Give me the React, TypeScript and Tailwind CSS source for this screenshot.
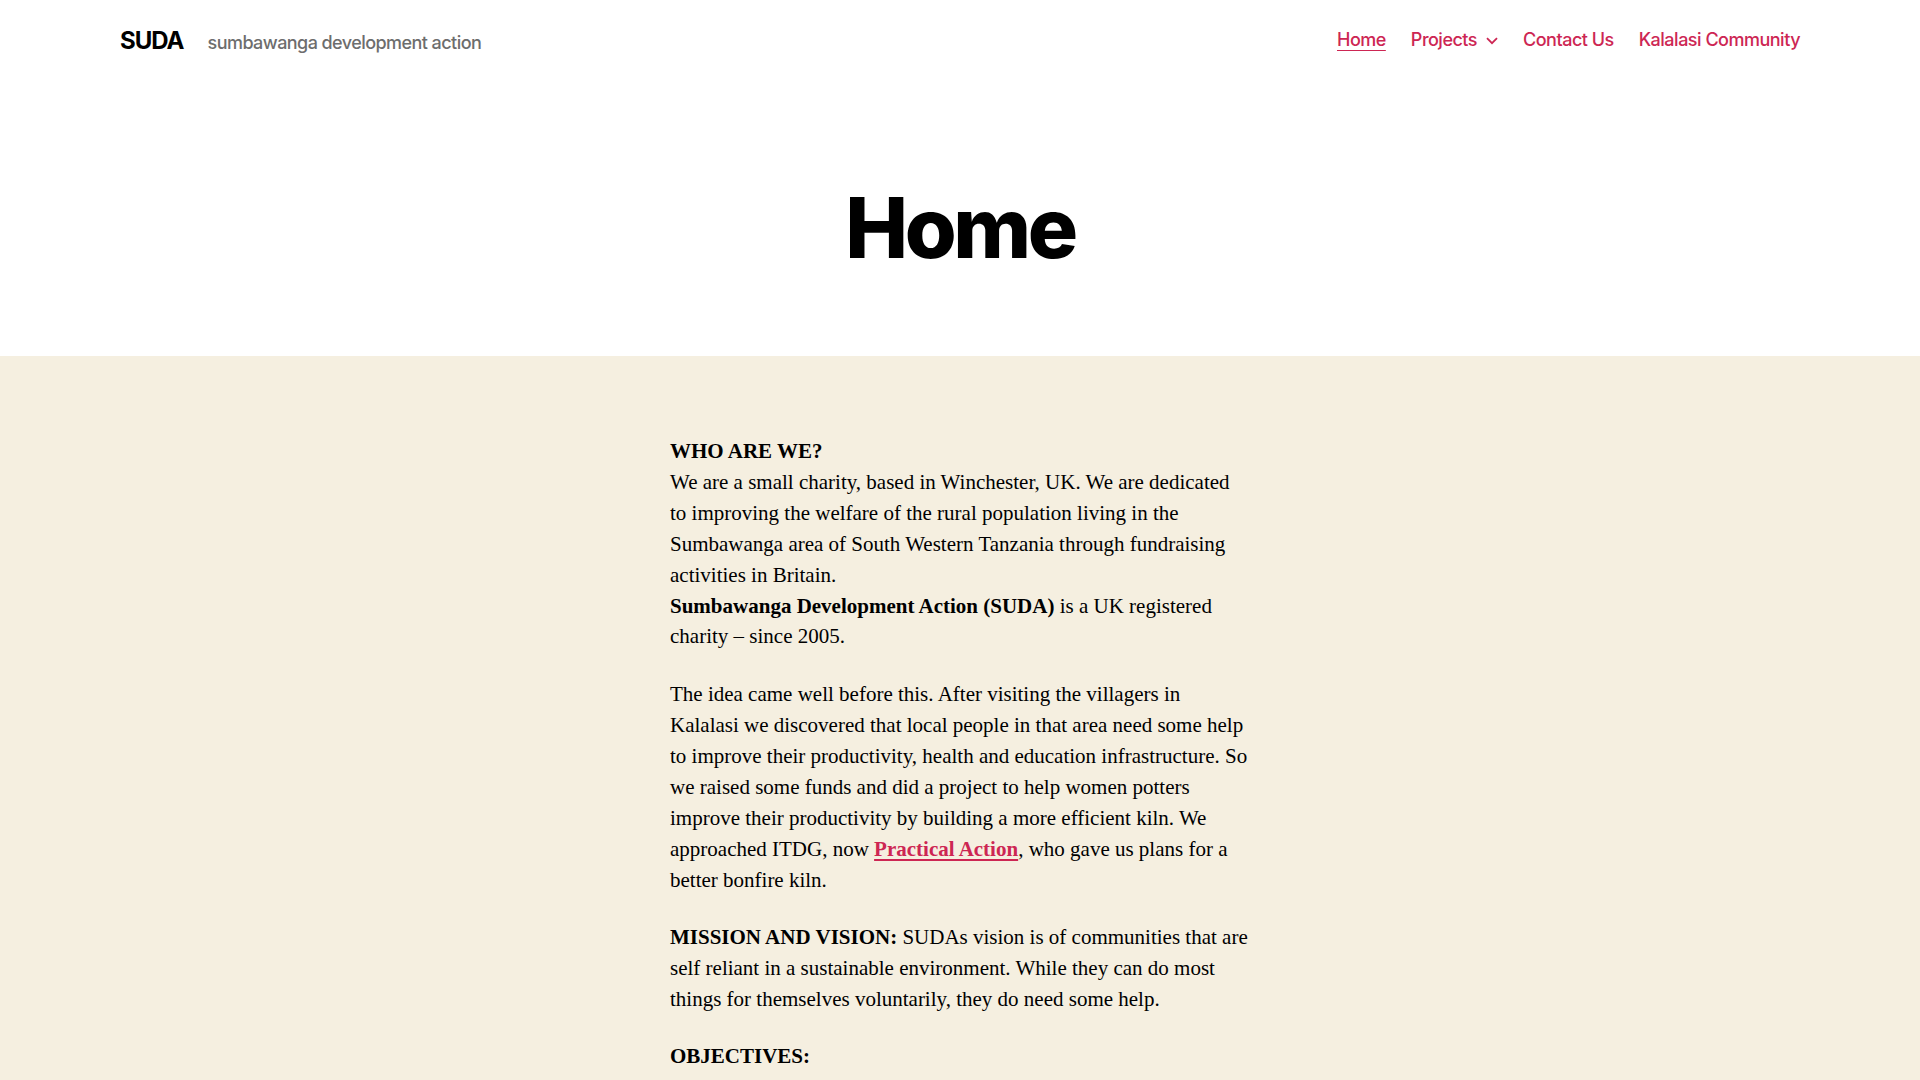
export default function App() {
  const navItems = ['Home', 'Projects', 'Contact Us', 'Kalalasi Community'];

  return (
    <div className="min-h-screen bg-white text-black">
      {/* Header */}
      <header className="font-['Inter',sans-serif]">
        <div className="mx-[120px] flex h-[100px] items-start justify-between pt-[23px]">
          <div className="flex items-baseline">
            <span className="text-[24px] font-bold tracking-[-0.0415625em]">SUDA</span>
            <span className="ml-[24px] text-[18px] font-medium tracking-[-0.0311em] text-[#6d6d6d]">sumbawanga development action</span>
          </div>
          <nav className="mt-[3px] flex items-baseline gap-[25px] text-[18px] font-medium tracking-[-0.0277em] text-[#cd2653]">
            {navItems.map((item) => (
              <a
                key={item}
                href="#"
                className={`flex items-center ${item === 'Home' ? 'underline underline-offset-[4px] decoration-[1px]' : ''}`}
              >
                {item}
                {item === 'Projects' && (
                  <svg className="ml-[9px] mt-[3px]" width="12" height="8" viewBox="0 0 12 8" fill="none">
                    <polyline points="1,1.2 6,6.2 11,1.2" stroke="#cd2653" strokeWidth="1.8" />
                  </svg>
                )}
              </a>
            ))}
          </nav>
        </div>
      </header>

      {/* Page title */}
      <div className="flex justify-center py-[80px] font-['Inter',sans-serif]">
        <h1 className="text-[84px] font-extrabold leading-[1.138] tracking-[-0.0415625em]">Home</h1>
      </div>

      {/* Content */}
      <main className="bg-[#f5efe0] pt-[80px] pb-[80px]">
        <div className="mx-auto w-[580px] font-['Liberation_Serif','Times_New_Roman',serif] text-[21px] leading-[1.476] text-black">
          <p className="mb-[1.25em]">
            <strong>WHO ARE WE?</strong>
            <br />
            We are a small charity, based in Winchester, UK. We are dedicated to improving the welfare of the rural
            population living in the Sumbawanga area of South Western Tanzania through fundraising activities in Britain.
            <br />
            <strong>Sumbawanga Development Action (SUDA)</strong> is a UK registered charity – since 2005.
          </p>
          <p className="mb-[1.25em]">
            The idea came well before this. After visiting the villagers in Kalalasi we discovered that local people in
            that area need some help to improve their productivity, health and education infrastructure. So we raised
            some funds and did a project to help women potters improve their productivity by building a more efficient
            kiln. We approached ITDG, now{' '}
            <a href="#" className="font-bold text-[#cd2653] underline decoration-[2px] underline-offset-[3px]">
              Practical Action
            </a>
            , who gave us plans for a better bonfire kiln.
          </p>
          <p className="mb-[1.25em]">
            <strong>MISSION AND VISION:</strong> SUDAs vision is of communities that are self reliant in a sustainable
            environment. While they can do most things for themselves voluntarily, they do need some help.
          </p>
          <p className="mb-[1.25em]">
            <strong>OBJECTIVES:</strong>
          </p>
        </div>
      </main>
    </div>
  );
}
